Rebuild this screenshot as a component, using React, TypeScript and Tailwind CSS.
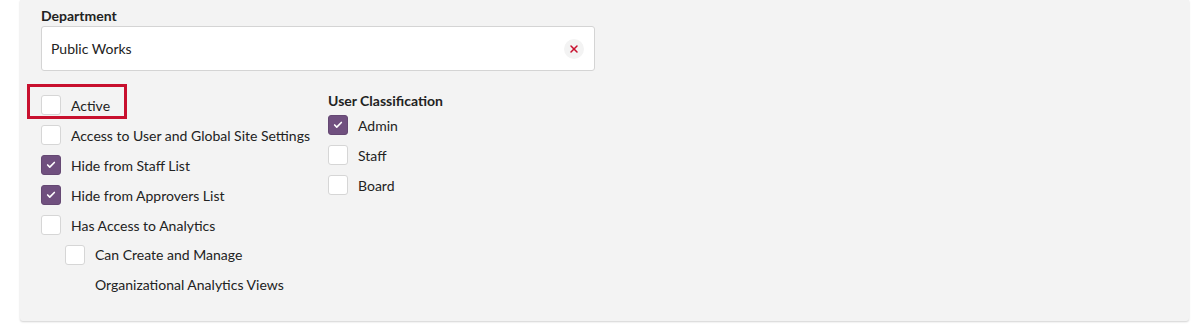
import { Check, X } from "lucide-react";

type Item = { label: string; checked?: boolean };

const leftItems: Item[] = [
  { label: "Access to User and Global Site Settings" },
  { label: "Hide from Staff List", checked: true },
  { label: "Hide from Approvers List", checked: true },
  { label: "Has Access to Analytics" },
];

const classifications: Item[] = [
  { label: "Admin", checked: true },
  { label: "Staff" },
  { label: "Board" },
];

function Box({ checked }: { checked?: boolean }) {
  return (
    <span
      className={
        checked
          ? "flex h-5 w-5 flex-shrink-0 items-center justify-center rounded-[3px] border border-[#654873] bg-[#70507f]"
          : "flex h-5 w-5 flex-shrink-0 items-center justify-center rounded-[3px] border border-[#d6d6d6] bg-white"
      }
    >
      {checked && <Check className="h-[10px] w-[10px] text-white" strokeWidth={4} />}
    </span>
  );
}

function Row({ label, checked }: Item) {
  return (
    <label className="flex h-[30px] items-center gap-[10px]">
      <Box checked={checked} />
      <span>{label}</span>
    </label>
  );
}

export default function App() {
  return (
    <div className="h-[330px] w-full bg-white font-['Lato',sans-serif] text-[14px] text-[#222]">
      <div className="ml-[20px] h-[321px] w-[1169px] rounded-b-[3px] bg-[#f3f3f3] pl-[21px] pt-[6px] shadow-[0_1px_2px_rgba(0,0,0,0.18)]">
        {/* Department */}
        <div className="font-bold leading-[20px]">Department</div>
        <div className="flex h-[45px] w-[554px] items-center justify-between rounded-[3px] border border-[#d4d4d4] bg-white pl-[9px] pr-[10px]">
          <span>Public Works</span>
          <span className="flex h-5 w-5 items-center justify-center rounded-full bg-[#f3f3f3]">
            <X className="h-[12px] w-[12px] text-[#c8102e]" strokeWidth={3} />
          </span>
        </div>

        <div className="mt-[19px] flex gap-[18px]">
          {/* Left column */}
          <div className="flex flex-col">
            <div className="relative">
              <Row label="Active" />
              <div className="absolute left-[-14px] top-[-6px] h-[35px] w-[100px] border-[3px] border-[#c8102e]" />
            </div>
            {leftItems.map((it) => (
              <Row key={it.label} {...it} />
            ))}
            <label className="ml-6 flex items-start gap-[10px]">
              <span className="mt-[5px]">
                <Box />
              </span>
              <span className="leading-[30px]">
                Can Create and Manage
                <br />
                Organizational Analytics Views
              </span>
            </label>
          </div>

          {/* User Classification */}
          <div className="flex flex-col pt-[2px]">
            <div className="font-bold leading-[18px]">User Classification</div>
            {classifications.map((it) => (
              <Row key={it.label} {...it} />
            ))}
          </div>
        </div>
      </div>
    </div>
  );
}
